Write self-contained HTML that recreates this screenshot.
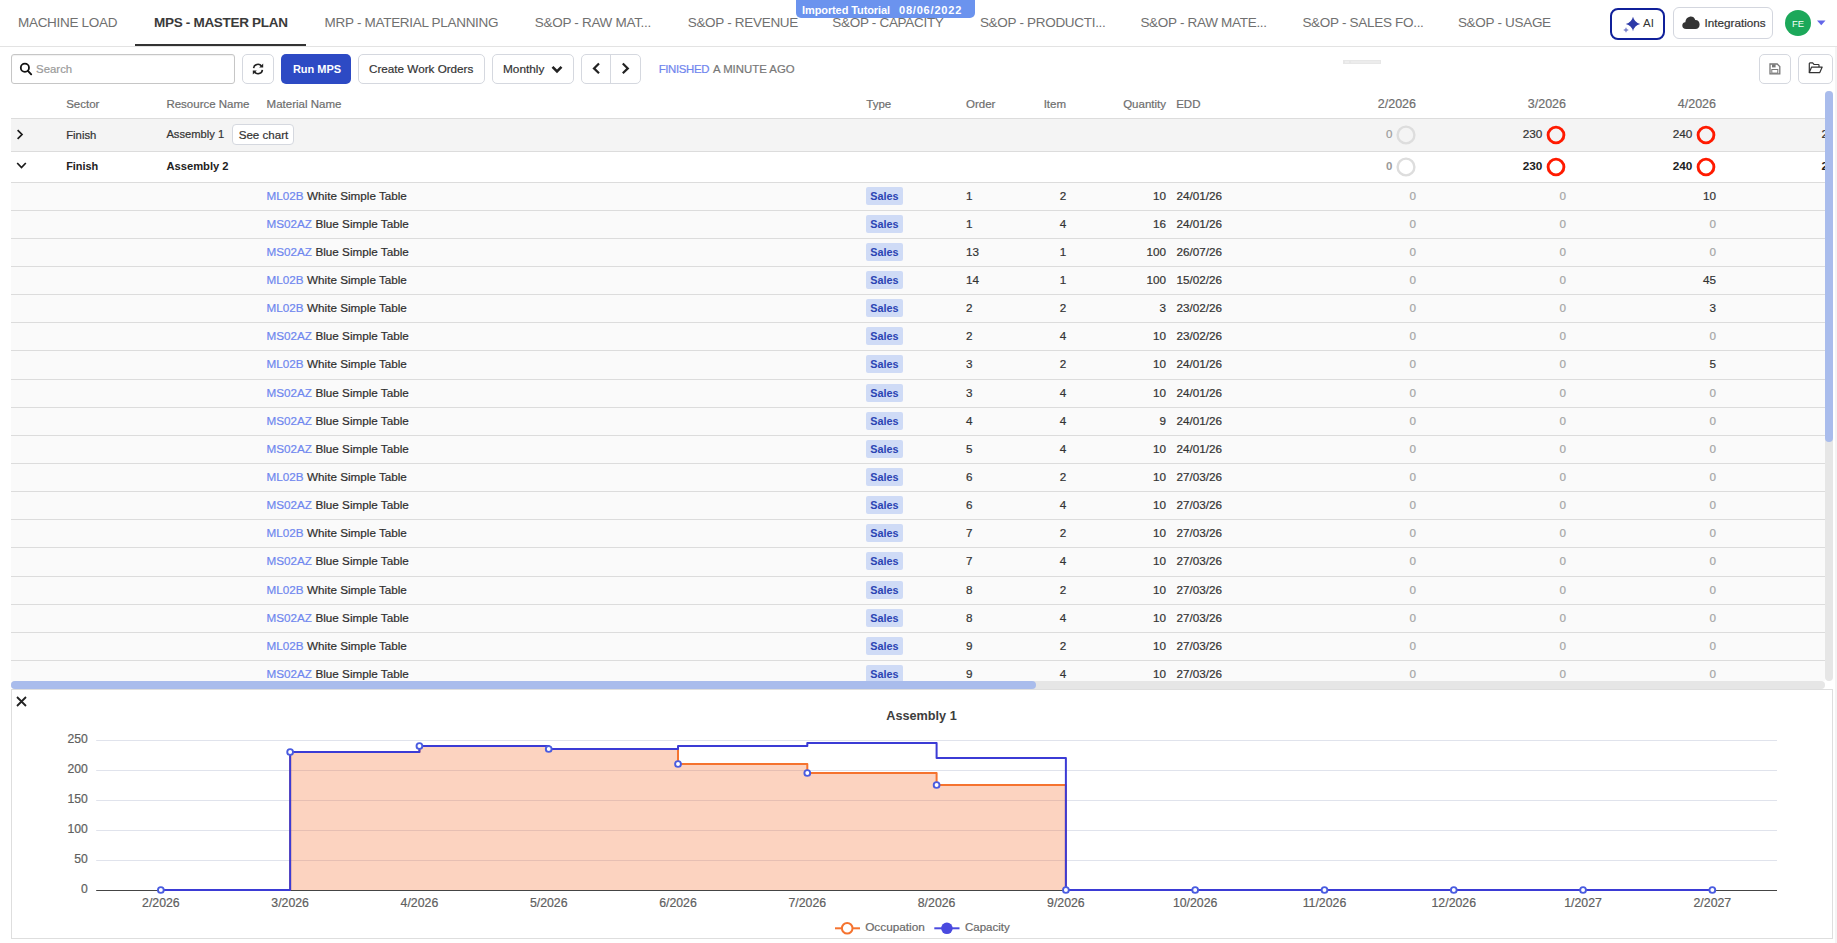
<!DOCTYPE html>
<html><head><meta charset="utf-8"><title>MPS - Master Plan</title>
<style>
html,body{margin:0;padding:0;}
body{width:1837px;height:943px;position:relative;overflow:hidden;background:#fff;font-family:"Liberation Sans",sans-serif;}
.t{position:absolute;white-space:nowrap;line-height:1;}
.n{-webkit-text-stroke:0.2px currentColor;}
svg{display:block}
</style></head><body>
<div style="position:absolute;left:0px;top:46px;width:1837px;height:1px;background:#e3e3e3"></div>
<div style="position:absolute;left:135px;top:44px;width:171px;height:2px;background:#333"></div>
<div class="t" style="left:18px;top:15.87px;font-size:13.5px;color:#707070;letter-spacing:-0.3px">MACHINE LOAD</div>
<div class="t" style="left:154px;top:15.87px;font-size:13.5px;font-weight:700;color:#3a3a3a;letter-spacing:-0.3px">MPS - MASTER PLAN</div>
<div class="t" style="left:324.6px;top:15.87px;font-size:13.5px;color:#707070;letter-spacing:-0.3px">MRP - MATERIAL PLANNING</div>
<div class="t" style="left:534.8px;top:15.87px;font-size:13.5px;color:#707070;letter-spacing:-0.3px">S&amp;OP - RAW MAT...</div>
<div class="t" style="left:687.7px;top:15.87px;font-size:13.5px;color:#707070;letter-spacing:-0.3px">S&amp;OP - REVENUE</div>
<div class="t" style="left:832.3px;top:15.87px;font-size:13.5px;color:#707070;letter-spacing:-0.3px">S&amp;OP - CAPACITY</div>
<div class="t" style="left:979.9px;top:15.87px;font-size:13.5px;color:#707070;letter-spacing:-0.3px">S&amp;OP - PRODUCTI...</div>
<div class="t" style="left:1140.4px;top:15.87px;font-size:13.5px;color:#707070;letter-spacing:-0.3px">S&amp;OP - RAW MATE...</div>
<div class="t" style="left:1302.4px;top:15.87px;font-size:13.5px;color:#707070;letter-spacing:-0.3px">S&amp;OP - SALES FO...</div>
<div class="t" style="left:1457.9px;top:15.87px;font-size:13.5px;color:#707070;letter-spacing:-0.3px">S&amp;OP - USAGE</div>
<div style="position:absolute;left:796px;top:0px;width:178.5px;height:18px;background:#6b93ee;border-radius:0 0 5px 5px"></div>
<div class="t" style="left:802px;top:4.59px;font-size:11px;font-weight:700;color:#fff;letter-spacing:-0.1px">Imported Tutorial</div>
<div class="t" style="left:899px;top:4.59px;font-size:11px;font-weight:700;color:#fff;letter-spacing:0.8px">08/06/2022</div>
<div style="position:absolute;left:1610px;top:8px;width:55px;height:32px;box-sizing:border-box;border:2px solid #10209a;border-radius:8px;background:#fff"></div>
<svg style="position:absolute;left:1622px;top:15px" width="20" height="18" viewBox="0 0 20 18"><path d="M11 1.8 Q12.4 7.6 18.2 9 Q12.4 10.4 11 16.2 Q9.6 10.4 3.8 9 Q9.6 7.6 11 1.8Z" fill="#2d3aa8"/><path d="M4 12.2 Q4.4 14.5 6.8 15 Q4.4 15.5 4 17.8 Q3.6 15.5 1.2 15 Q3.6 14.5 4 12.2Z" fill="#7b83cc"/></svg>
<div class="t" style="left:1643px;top:18.17px;font-size:11.5px;color:#333;">AI</div>
<div style="position:absolute;left:1673px;top:7px;width:100px;height:32px;box-sizing:border-box;border:1px solid #d3d6de;border-radius:6px;background:#fff"></div>
<svg style="position:absolute;left:1682px;top:15px" width="18" height="15" viewBox="0 0 18 15"><path d="M4.2 14 Q0.3 14 0.3 10.6 Q0.3 7.6 3.3 7.2 Q3.8 2.4 8.4 1.6 Q12 1.4 13.3 5 Q17.6 5.2 17.6 9.6 Q17.5 14 13.4 14 Z" fill="#333"/></svg>
<div class="t n" style="left:1704.5px;top:17.20px;font-size:11.7px;color:#333;">Integrations</div>
<div style="position:absolute;left:1785px;top:10px;width:26px;height:26px;background:#1ca85a;border-radius:50%"></div>
<div class="t" style="left:1498px;width:600px;text-align:center;top:18.76px;font-size:9.5px;color:#f4fff8;">FE</div>
<svg style="position:absolute;left:1817px;top:20px" width="9" height="6" viewBox="0 0 9 6"><path d="M0 0.5H8.5L4.25 5.2Z" fill="#6366e8"/></svg>
<div style="position:absolute;left:11px;top:54px;width:224px;height:30px;box-sizing:border-box;border:1px solid #c6c6c6;border-radius:3px;background:#fff;box-shadow:inset 0 1px 1px rgba(0,0,0,0.06)"></div>
<svg style="position:absolute;left:18px;top:61px" width="16" height="16" viewBox="0 0 16 16"><circle cx="6.9" cy="6.8" r="4.1" fill="none" stroke="#111" stroke-width="1.8"/><path d="M9.9 9.8 L13.2 13.3" stroke="#111" stroke-width="1.9" stroke-linecap="round"/></svg>
<div class="t n" style="left:36.1px;top:64.05px;font-size:11.4px;color:#9a9a9a;">Search</div>
<div style="position:absolute;left:242px;top:54px;width:32px;height:30px;box-sizing:border-box;border:1px solid #d5d8df;border-radius:5px;background:#fff"></div>
<svg style="position:absolute;left:252px;top:63px" width="12" height="12" viewBox="0 0 12 12"><path d="M1.6 5.2 A4.4 4.4 0 0 1 9.6 3.2" fill="none" stroke="#222" stroke-width="1.6"/><path d="M7.2 4.4 L11.2 4.4 L11.2 0.4 Z" fill="#222"/><path d="M10.4 6.8 A4.4 4.4 0 0 1 2.4 8.8" fill="none" stroke="#222" stroke-width="1.6"/><path d="M4.8 7.6 L0.8 7.6 L0.8 11.6 Z" fill="#222"/></svg>
<div style="position:absolute;left:281px;top:54px;width:70px;height:30px;border-radius:5px;background:#2d4ac4"></div>
<div class="t" style="left:292.9px;top:63.89px;font-size:11px;font-weight:700;color:#fff;letter-spacing:0px">Run MPS</div>
<div style="position:absolute;left:358px;top:54px;width:127px;height:30px;box-sizing:border-box;border:1px solid #d5d8df;border-radius:5px;background:#fff"></div>
<div class="t n" style="left:369px;top:63.30px;font-size:11.7px;color:#333;">Create Work Orders</div>
<div style="position:absolute;left:492px;top:54px;width:82px;height:30px;box-sizing:border-box;border:1px solid #d5d8df;border-radius:5px;background:#fff"></div>
<div class="t n" style="left:503px;top:64.01px;font-size:11.8px;color:#333;">Monthly</div>
<svg style="position:absolute;left:551px;top:65px" width="12" height="9" viewBox="0 0 12 9"><path d="M1.5 1.8 L6 6.3 L10.5 1.8" fill="none" stroke="#222" stroke-width="2.6"/></svg>
<div style="position:absolute;left:581px;top:54px;width:60px;height:30px;box-sizing:border-box;border:1px solid #d5d8df;border-radius:5px;background:#fff"></div>
<div style="position:absolute;left:610px;top:55px;width:1px;height:28px;background:#d5d8df"></div>
<svg style="position:absolute;left:591px;top:62px" width="11" height="13" viewBox="0 0 11 13"><path d="M8 1.5 L3 6.4 L8 11.3" fill="none" stroke="#222" stroke-width="2.2"/></svg>
<svg style="position:absolute;left:620px;top:62px" width="11" height="13" viewBox="0 0 11 13"><path d="M2.8 1.5 L7.8 6.4 L2.8 11.3" fill="none" stroke="#222" stroke-width="2.2"/></svg>
<div class="t n" style="left:658.7px;top:63.85px;font-size:11.4px;color:#6f85ee;letter-spacing:-0.35px">FINISHED</div>
<div class="t n" style="left:713px;top:63.85px;font-size:11.4px;color:#777;">A MINUTE AGO</div>
<div style="position:absolute;left:1343px;top:60px;width:38px;height:4px;background:#e7e7e7"></div>
<div style="position:absolute;left:1345px;top:61px;width:4px;height:2px;background:#eeeeee"></div>
<div style="position:absolute;left:1351px;top:61px;width:29px;height:2px;background:#ececec"></div>
<div style="position:absolute;left:1759px;top:54px;width:32px;height:30px;box-sizing:border-box;border:1px solid #d5d8df;border-radius:5px;background:#fff"></div>
<svg style="position:absolute;left:1769px;top:63px" width="12" height="12" viewBox="0 0 12 12"><path d="M1 1 H8.2 L10.8 3.6 V10.8 H1 Z" fill="none" stroke="#777" stroke-width="1.3"/><rect x="3" y="1.4" width="3.6" height="3" fill="#777"/><rect x="2.8" y="6.5" width="6" height="3.6" fill="none" stroke="#777" stroke-width="1"/></svg>
<div style="position:absolute;left:1798px;top:54px;width:35px;height:30px;box-sizing:border-box;border:1px solid #d5d8df;border-radius:5px;background:#fff"></div>
<svg style="position:absolute;left:1808px;top:62px" width="16" height="12" viewBox="0 0 16 12"><path d="M1.3 10.6 V1.6 Q1.3 0.9 2 0.9 H4.6 L6 2.5 H10.3 Q11 2.5 11 3.2 V4.9" fill="none" stroke="#333" stroke-width="1.2"/><path d="M1.3 10.6 L3.6 5.1 H14.2 L11.8 10.6 Z" fill="none" stroke="#333" stroke-width="1.2" stroke-linejoin="round"/></svg>
<div class="t n" style="left:66.2px;top:98.77px;font-size:11.5px;color:#6e6e6e;">Sector</div>
<div class="t n" style="left:166.4px;top:98.77px;font-size:11.5px;color:#6e6e6e;">Resource Name</div>
<div class="t n" style="left:266.6px;top:98.77px;font-size:11.5px;color:#6e6e6e;">Material Name</div>
<div class="t n" style="left:866.3px;top:98.77px;font-size:11.5px;color:#6e6e6e;">Type</div>
<div class="t n" style="left:966px;top:98.77px;font-size:11.5px;color:#6e6e6e;">Order</div>
<div class="t n" style="right:771px;top:98.77px;font-size:11.5px;color:#6e6e6e;">Item</div>
<div class="t n" style="right:671px;top:98.77px;font-size:11.5px;color:#6e6e6e;">Quantity</div>
<div class="t n" style="left:1176.2px;top:98.77px;font-size:11.5px;color:#6e6e6e;">EDD</div>
<div class="t n" style="right:421px;top:97.92px;font-size:12.5px;color:#6e6e6e;">2/2026</div>
<div class="t n" style="right:271px;top:97.92px;font-size:12.5px;color:#6e6e6e;">3/2026</div>
<div class="t n" style="right:121px;top:97.92px;font-size:12.5px;color:#6e6e6e;">4/2026</div>
<div style="position:absolute;left:11px;top:118px;width:1814px;height:1px;background:#dcdcdc"></div>
<div style="position:absolute;left:11px;top:119px;width:1814px;height:32px;background:#f4f4f4"></div>
<div style="position:absolute;left:11px;top:151px;width:1814px;height:1px;background:#dcdcdc"></div>
<div style="position:absolute;left:11px;top:152px;width:1814px;height:30px;background:#fff"></div>
<div style="position:absolute;left:11px;top:182px;width:1814px;height:1px;background:#dcdcdc"></div>
<svg style="position:absolute;left:15px;top:128px" width="10" height="13" viewBox="0 0 10 13"><path d="M2.6 2.2 L7 6.5 L2.6 10.8" fill="none" stroke="#1a1a1a" stroke-width="1.7"/></svg>
<svg style="position:absolute;left:15px;top:160px" width="13" height="11" viewBox="0 0 13 11"><path d="M2.2 3 L6.5 7.6 L10.8 3" fill="none" stroke="#1a1a1a" stroke-width="1.7"/></svg>
<div class="t n" style="left:66.2px;top:129.83px;font-size:11.3px;color:#333;">Finish</div>
<div class="t n" style="left:166.4px;top:129.02px;font-size:11.2px;color:#333;">Assembly 1</div>
<div style="position:absolute;left:232.2px;top:124.2px;width:61.7px;height:21.3px;box-sizing:border-box;border:1px solid #d5d8df;border-radius:4px;background:#fff"></div>
<div class="t n" style="left:238.7px;top:128.88px;font-size:11.6px;color:#333;">See chart</div>
<div class="t" style="left:66.2px;top:160.97px;font-size:10.9px;font-weight:700;color:#222;">Finish</div>
<div class="t" style="left:166.4px;top:160.72px;font-size:11.2px;font-weight:700;color:#222;">Assembly 2</div>
<div class="t n" style="right:444.5px;top:128.87px;font-size:11.5px;color:#9a9a9a;">0</div>
<svg style="position:absolute;left:1395px;top:124px" width="22" height="22" viewBox="0 0 22 22"><circle cx="11" cy="11" r="8.4" fill="none" stroke="#dddddd" stroke-width="2.4"/></svg>
<div class="t n" style="right:294.70000000000005px;top:128.61px;font-size:11.8px;color:#333;">230</div>
<svg style="position:absolute;left:1545px;top:124px" width="22" height="22" viewBox="0 0 22 22"><circle cx="11" cy="11" r="7.9" fill="none" stroke="#ff1a00" stroke-width="2.9"/></svg>
<div class="t n" style="right:144.70000000000005px;top:128.61px;font-size:11.8px;color:#333;">240</div>
<svg style="position:absolute;left:1695px;top:124px" width="22" height="22" viewBox="0 0 22 22"><circle cx="11" cy="11" r="7.9" fill="none" stroke="#ff1a00" stroke-width="2.9"/></svg>
<div class="t" style="right:444.5px;top:160.87px;font-size:11.5px;font-weight:700;color:#9a9a9a;">0</div>
<svg style="position:absolute;left:1395px;top:156px" width="22" height="22" viewBox="0 0 22 22"><circle cx="11" cy="11" r="8.4" fill="none" stroke="#dddddd" stroke-width="2.4"/></svg>
<div class="t" style="right:294.70000000000005px;top:160.61px;font-size:11.8px;font-weight:700;color:#222;">230</div>
<svg style="position:absolute;left:1545px;top:156px" width="22" height="22" viewBox="0 0 22 22"><circle cx="11" cy="11" r="7.9" fill="none" stroke="#ff1a00" stroke-width="2.9"/></svg>
<div class="t" style="right:144.70000000000005px;top:160.61px;font-size:11.8px;font-weight:700;color:#222;">240</div>
<svg style="position:absolute;left:1695px;top:156px" width="22" height="22" viewBox="0 0 22 22"><circle cx="11" cy="11" r="7.9" fill="none" stroke="#ff1a00" stroke-width="2.9"/></svg>
<div style="position:absolute;left:1800px;top:110px;width:25px;height:70px;overflow:hidden">
<div class="t n" style="left:21.5px;top:18.61px;font-size:11.8px;color:#333;">2</div>
<div class="t" style="left:21.5px;top:50.61px;font-size:11.8px;font-weight:700;color:#222;">2</div>
</div>
<div style="position:absolute;left:11px;top:183px;width:1814px;height:498px;background:#fafafa"></div>
<div class="t n" style="left:266.4px;top:189.90px;font-size:11.7px;color:#6f87ef;">ML02B</div>
<div class="t n" style="left:307.05px;top:189.90px;font-size:11.7px;color:#2e2e2e;">White Simple Table</div>
<div style="position:absolute;left:866px;top:187px;width:37px;height:18px;background:#cfdbf6;border-radius:2px"></div>
<div class="t" style="left:870.2px;top:190.66px;font-size:10.8px;font-weight:700;color:#2b44b3;">Sales</div>
<div class="t n" style="left:966px;top:189.90px;font-size:11.7px;color:#333;">1</div>
<div class="t n" style="right:770.7px;top:189.90px;font-size:11.7px;color:#333;">2</div>
<div class="t n" style="right:671px;top:189.90px;font-size:11.7px;color:#333;">10</div>
<div class="t n" style="left:1176.5px;top:189.90px;font-size:11.7px;color:#333;">24/01/26</div>
<div class="t n" style="right:421px;top:189.90px;font-size:11.7px;color:#a5a5a5;">0</div>
<div class="t n" style="right:271px;top:189.90px;font-size:11.7px;color:#a5a5a5;">0</div>
<div class="t n" style="right:121px;top:189.90px;font-size:11.7px;color:#333;">10</div>
<div style="position:absolute;left:11px;top:210px;width:1814px;height:1px;background:#dcdcdc"></div>
<div class="t n" style="left:266.4px;top:217.90px;font-size:11.7px;color:#6f87ef;">MS02AZ</div>
<div class="t n" style="left:315.47px;top:217.90px;font-size:11.7px;color:#2e2e2e;">Blue Simple Table</div>
<div style="position:absolute;left:866px;top:215px;width:37px;height:18px;background:#cfdbf6;border-radius:2px"></div>
<div class="t" style="left:870.2px;top:218.66px;font-size:10.8px;font-weight:700;color:#2b44b3;">Sales</div>
<div class="t n" style="left:966px;top:217.90px;font-size:11.7px;color:#333;">1</div>
<div class="t n" style="right:770.7px;top:217.90px;font-size:11.7px;color:#333;">4</div>
<div class="t n" style="right:671px;top:217.90px;font-size:11.7px;color:#333;">16</div>
<div class="t n" style="left:1176.5px;top:217.90px;font-size:11.7px;color:#333;">24/01/26</div>
<div class="t n" style="right:421px;top:217.90px;font-size:11.7px;color:#a5a5a5;">0</div>
<div class="t n" style="right:271px;top:217.90px;font-size:11.7px;color:#a5a5a5;">0</div>
<div class="t n" style="right:121px;top:217.90px;font-size:11.7px;color:#a5a5a5;">0</div>
<div style="position:absolute;left:11px;top:238px;width:1814px;height:1px;background:#dcdcdc"></div>
<div class="t n" style="left:266.4px;top:245.90px;font-size:11.7px;color:#6f87ef;">MS02AZ</div>
<div class="t n" style="left:315.47px;top:245.90px;font-size:11.7px;color:#2e2e2e;">Blue Simple Table</div>
<div style="position:absolute;left:866px;top:243px;width:37px;height:18px;background:#cfdbf6;border-radius:2px"></div>
<div class="t" style="left:870.2px;top:246.66px;font-size:10.8px;font-weight:700;color:#2b44b3;">Sales</div>
<div class="t n" style="left:966px;top:245.90px;font-size:11.7px;color:#333;">13</div>
<div class="t n" style="right:770.7px;top:245.90px;font-size:11.7px;color:#333;">1</div>
<div class="t n" style="right:671px;top:245.90px;font-size:11.7px;color:#333;">100</div>
<div class="t n" style="left:1176.5px;top:245.90px;font-size:11.7px;color:#333;">26/07/26</div>
<div class="t n" style="right:421px;top:245.90px;font-size:11.7px;color:#a5a5a5;">0</div>
<div class="t n" style="right:271px;top:245.90px;font-size:11.7px;color:#a5a5a5;">0</div>
<div class="t n" style="right:121px;top:245.90px;font-size:11.7px;color:#a5a5a5;">0</div>
<div style="position:absolute;left:11px;top:266px;width:1814px;height:1px;background:#dcdcdc"></div>
<div class="t n" style="left:266.4px;top:273.90px;font-size:11.7px;color:#6f87ef;">ML02B</div>
<div class="t n" style="left:307.05px;top:273.90px;font-size:11.7px;color:#2e2e2e;">White Simple Table</div>
<div style="position:absolute;left:866px;top:271px;width:37px;height:18px;background:#cfdbf6;border-radius:2px"></div>
<div class="t" style="left:870.2px;top:274.66px;font-size:10.8px;font-weight:700;color:#2b44b3;">Sales</div>
<div class="t n" style="left:966px;top:273.90px;font-size:11.7px;color:#333;">14</div>
<div class="t n" style="right:770.7px;top:273.90px;font-size:11.7px;color:#333;">1</div>
<div class="t n" style="right:671px;top:273.90px;font-size:11.7px;color:#333;">100</div>
<div class="t n" style="left:1176.5px;top:273.90px;font-size:11.7px;color:#333;">15/02/26</div>
<div class="t n" style="right:421px;top:273.90px;font-size:11.7px;color:#a5a5a5;">0</div>
<div class="t n" style="right:271px;top:273.90px;font-size:11.7px;color:#a5a5a5;">0</div>
<div class="t n" style="right:121px;top:273.90px;font-size:11.7px;color:#333;">45</div>
<div style="position:absolute;left:11px;top:294px;width:1814px;height:1px;background:#dcdcdc"></div>
<div class="t n" style="left:266.4px;top:301.90px;font-size:11.7px;color:#6f87ef;">ML02B</div>
<div class="t n" style="left:307.05px;top:301.90px;font-size:11.7px;color:#2e2e2e;">White Simple Table</div>
<div style="position:absolute;left:866px;top:299px;width:37px;height:18px;background:#cfdbf6;border-radius:2px"></div>
<div class="t" style="left:870.2px;top:302.66px;font-size:10.8px;font-weight:700;color:#2b44b3;">Sales</div>
<div class="t n" style="left:966px;top:301.90px;font-size:11.7px;color:#333;">2</div>
<div class="t n" style="right:770.7px;top:301.90px;font-size:11.7px;color:#333;">2</div>
<div class="t n" style="right:671px;top:301.90px;font-size:11.7px;color:#333;">3</div>
<div class="t n" style="left:1176.5px;top:301.90px;font-size:11.7px;color:#333;">23/02/26</div>
<div class="t n" style="right:421px;top:301.90px;font-size:11.7px;color:#a5a5a5;">0</div>
<div class="t n" style="right:271px;top:301.90px;font-size:11.7px;color:#a5a5a5;">0</div>
<div class="t n" style="right:121px;top:301.90px;font-size:11.7px;color:#333;">3</div>
<div style="position:absolute;left:11px;top:322px;width:1814px;height:1px;background:#dcdcdc"></div>
<div class="t n" style="left:266.4px;top:329.90px;font-size:11.7px;color:#6f87ef;">MS02AZ</div>
<div class="t n" style="left:315.47px;top:329.90px;font-size:11.7px;color:#2e2e2e;">Blue Simple Table</div>
<div style="position:absolute;left:866px;top:327px;width:37px;height:18px;background:#cfdbf6;border-radius:2px"></div>
<div class="t" style="left:870.2px;top:330.66px;font-size:10.8px;font-weight:700;color:#2b44b3;">Sales</div>
<div class="t n" style="left:966px;top:329.90px;font-size:11.7px;color:#333;">2</div>
<div class="t n" style="right:770.7px;top:329.90px;font-size:11.7px;color:#333;">4</div>
<div class="t n" style="right:671px;top:329.90px;font-size:11.7px;color:#333;">10</div>
<div class="t n" style="left:1176.5px;top:329.90px;font-size:11.7px;color:#333;">23/02/26</div>
<div class="t n" style="right:421px;top:329.90px;font-size:11.7px;color:#a5a5a5;">0</div>
<div class="t n" style="right:271px;top:329.90px;font-size:11.7px;color:#a5a5a5;">0</div>
<div class="t n" style="right:121px;top:329.90px;font-size:11.7px;color:#a5a5a5;">0</div>
<div style="position:absolute;left:11px;top:350px;width:1814px;height:1px;background:#dcdcdc"></div>
<div class="t n" style="left:266.4px;top:357.90px;font-size:11.7px;color:#6f87ef;">ML02B</div>
<div class="t n" style="left:307.05px;top:357.90px;font-size:11.7px;color:#2e2e2e;">White Simple Table</div>
<div style="position:absolute;left:866px;top:355px;width:37px;height:18px;background:#cfdbf6;border-radius:2px"></div>
<div class="t" style="left:870.2px;top:358.66px;font-size:10.8px;font-weight:700;color:#2b44b3;">Sales</div>
<div class="t n" style="left:966px;top:357.90px;font-size:11.7px;color:#333;">3</div>
<div class="t n" style="right:770.7px;top:357.90px;font-size:11.7px;color:#333;">2</div>
<div class="t n" style="right:671px;top:357.90px;font-size:11.7px;color:#333;">10</div>
<div class="t n" style="left:1176.5px;top:357.90px;font-size:11.7px;color:#333;">24/01/26</div>
<div class="t n" style="right:421px;top:357.90px;font-size:11.7px;color:#a5a5a5;">0</div>
<div class="t n" style="right:271px;top:357.90px;font-size:11.7px;color:#a5a5a5;">0</div>
<div class="t n" style="right:121px;top:357.90px;font-size:11.7px;color:#333;">5</div>
<div style="position:absolute;left:11px;top:379px;width:1814px;height:1px;background:#dcdcdc"></div>
<div class="t n" style="left:266.4px;top:386.90px;font-size:11.7px;color:#6f87ef;">MS02AZ</div>
<div class="t n" style="left:315.47px;top:386.90px;font-size:11.7px;color:#2e2e2e;">Blue Simple Table</div>
<div style="position:absolute;left:866px;top:384px;width:37px;height:18px;background:#cfdbf6;border-radius:2px"></div>
<div class="t" style="left:870.2px;top:387.66px;font-size:10.8px;font-weight:700;color:#2b44b3;">Sales</div>
<div class="t n" style="left:966px;top:386.90px;font-size:11.7px;color:#333;">3</div>
<div class="t n" style="right:770.7px;top:386.90px;font-size:11.7px;color:#333;">4</div>
<div class="t n" style="right:671px;top:386.90px;font-size:11.7px;color:#333;">10</div>
<div class="t n" style="left:1176.5px;top:386.90px;font-size:11.7px;color:#333;">24/01/26</div>
<div class="t n" style="right:421px;top:386.90px;font-size:11.7px;color:#a5a5a5;">0</div>
<div class="t n" style="right:271px;top:386.90px;font-size:11.7px;color:#a5a5a5;">0</div>
<div class="t n" style="right:121px;top:386.90px;font-size:11.7px;color:#a5a5a5;">0</div>
<div style="position:absolute;left:11px;top:407px;width:1814px;height:1px;background:#dcdcdc"></div>
<div class="t n" style="left:266.4px;top:414.90px;font-size:11.7px;color:#6f87ef;">MS02AZ</div>
<div class="t n" style="left:315.47px;top:414.90px;font-size:11.7px;color:#2e2e2e;">Blue Simple Table</div>
<div style="position:absolute;left:866px;top:412px;width:37px;height:18px;background:#cfdbf6;border-radius:2px"></div>
<div class="t" style="left:870.2px;top:415.66px;font-size:10.8px;font-weight:700;color:#2b44b3;">Sales</div>
<div class="t n" style="left:966px;top:414.90px;font-size:11.7px;color:#333;">4</div>
<div class="t n" style="right:770.7px;top:414.90px;font-size:11.7px;color:#333;">4</div>
<div class="t n" style="right:671px;top:414.90px;font-size:11.7px;color:#333;">9</div>
<div class="t n" style="left:1176.5px;top:414.90px;font-size:11.7px;color:#333;">24/01/26</div>
<div class="t n" style="right:421px;top:414.90px;font-size:11.7px;color:#a5a5a5;">0</div>
<div class="t n" style="right:271px;top:414.90px;font-size:11.7px;color:#a5a5a5;">0</div>
<div class="t n" style="right:121px;top:414.90px;font-size:11.7px;color:#a5a5a5;">0</div>
<div style="position:absolute;left:11px;top:435px;width:1814px;height:1px;background:#dcdcdc"></div>
<div class="t n" style="left:266.4px;top:442.90px;font-size:11.7px;color:#6f87ef;">MS02AZ</div>
<div class="t n" style="left:315.47px;top:442.90px;font-size:11.7px;color:#2e2e2e;">Blue Simple Table</div>
<div style="position:absolute;left:866px;top:440px;width:37px;height:18px;background:#cfdbf6;border-radius:2px"></div>
<div class="t" style="left:870.2px;top:443.66px;font-size:10.8px;font-weight:700;color:#2b44b3;">Sales</div>
<div class="t n" style="left:966px;top:442.90px;font-size:11.7px;color:#333;">5</div>
<div class="t n" style="right:770.7px;top:442.90px;font-size:11.7px;color:#333;">4</div>
<div class="t n" style="right:671px;top:442.90px;font-size:11.7px;color:#333;">10</div>
<div class="t n" style="left:1176.5px;top:442.90px;font-size:11.7px;color:#333;">24/01/26</div>
<div class="t n" style="right:421px;top:442.90px;font-size:11.7px;color:#a5a5a5;">0</div>
<div class="t n" style="right:271px;top:442.90px;font-size:11.7px;color:#a5a5a5;">0</div>
<div class="t n" style="right:121px;top:442.90px;font-size:11.7px;color:#a5a5a5;">0</div>
<div style="position:absolute;left:11px;top:463px;width:1814px;height:1px;background:#dcdcdc"></div>
<div class="t n" style="left:266.4px;top:470.90px;font-size:11.7px;color:#6f87ef;">ML02B</div>
<div class="t n" style="left:307.05px;top:470.90px;font-size:11.7px;color:#2e2e2e;">White Simple Table</div>
<div style="position:absolute;left:866px;top:468px;width:37px;height:18px;background:#cfdbf6;border-radius:2px"></div>
<div class="t" style="left:870.2px;top:471.66px;font-size:10.8px;font-weight:700;color:#2b44b3;">Sales</div>
<div class="t n" style="left:966px;top:470.90px;font-size:11.7px;color:#333;">6</div>
<div class="t n" style="right:770.7px;top:470.90px;font-size:11.7px;color:#333;">2</div>
<div class="t n" style="right:671px;top:470.90px;font-size:11.7px;color:#333;">10</div>
<div class="t n" style="left:1176.5px;top:470.90px;font-size:11.7px;color:#333;">27/03/26</div>
<div class="t n" style="right:421px;top:470.90px;font-size:11.7px;color:#a5a5a5;">0</div>
<div class="t n" style="right:271px;top:470.90px;font-size:11.7px;color:#a5a5a5;">0</div>
<div class="t n" style="right:121px;top:470.90px;font-size:11.7px;color:#a5a5a5;">0</div>
<div style="position:absolute;left:11px;top:491px;width:1814px;height:1px;background:#dcdcdc"></div>
<div class="t n" style="left:266.4px;top:498.90px;font-size:11.7px;color:#6f87ef;">MS02AZ</div>
<div class="t n" style="left:315.47px;top:498.90px;font-size:11.7px;color:#2e2e2e;">Blue Simple Table</div>
<div style="position:absolute;left:866px;top:496px;width:37px;height:18px;background:#cfdbf6;border-radius:2px"></div>
<div class="t" style="left:870.2px;top:499.66px;font-size:10.8px;font-weight:700;color:#2b44b3;">Sales</div>
<div class="t n" style="left:966px;top:498.90px;font-size:11.7px;color:#333;">6</div>
<div class="t n" style="right:770.7px;top:498.90px;font-size:11.7px;color:#333;">4</div>
<div class="t n" style="right:671px;top:498.90px;font-size:11.7px;color:#333;">10</div>
<div class="t n" style="left:1176.5px;top:498.90px;font-size:11.7px;color:#333;">27/03/26</div>
<div class="t n" style="right:421px;top:498.90px;font-size:11.7px;color:#a5a5a5;">0</div>
<div class="t n" style="right:271px;top:498.90px;font-size:11.7px;color:#a5a5a5;">0</div>
<div class="t n" style="right:121px;top:498.90px;font-size:11.7px;color:#a5a5a5;">0</div>
<div style="position:absolute;left:11px;top:519px;width:1814px;height:1px;background:#dcdcdc"></div>
<div class="t n" style="left:266.4px;top:526.90px;font-size:11.7px;color:#6f87ef;">ML02B</div>
<div class="t n" style="left:307.05px;top:526.90px;font-size:11.7px;color:#2e2e2e;">White Simple Table</div>
<div style="position:absolute;left:866px;top:524px;width:37px;height:18px;background:#cfdbf6;border-radius:2px"></div>
<div class="t" style="left:870.2px;top:527.66px;font-size:10.8px;font-weight:700;color:#2b44b3;">Sales</div>
<div class="t n" style="left:966px;top:526.90px;font-size:11.7px;color:#333;">7</div>
<div class="t n" style="right:770.7px;top:526.90px;font-size:11.7px;color:#333;">2</div>
<div class="t n" style="right:671px;top:526.90px;font-size:11.7px;color:#333;">10</div>
<div class="t n" style="left:1176.5px;top:526.90px;font-size:11.7px;color:#333;">27/03/26</div>
<div class="t n" style="right:421px;top:526.90px;font-size:11.7px;color:#a5a5a5;">0</div>
<div class="t n" style="right:271px;top:526.90px;font-size:11.7px;color:#a5a5a5;">0</div>
<div class="t n" style="right:121px;top:526.90px;font-size:11.7px;color:#a5a5a5;">0</div>
<div style="position:absolute;left:11px;top:547px;width:1814px;height:1px;background:#dcdcdc"></div>
<div class="t n" style="left:266.4px;top:554.90px;font-size:11.7px;color:#6f87ef;">MS02AZ</div>
<div class="t n" style="left:315.47px;top:554.90px;font-size:11.7px;color:#2e2e2e;">Blue Simple Table</div>
<div style="position:absolute;left:866px;top:552px;width:37px;height:18px;background:#cfdbf6;border-radius:2px"></div>
<div class="t" style="left:870.2px;top:555.66px;font-size:10.8px;font-weight:700;color:#2b44b3;">Sales</div>
<div class="t n" style="left:966px;top:554.90px;font-size:11.7px;color:#333;">7</div>
<div class="t n" style="right:770.7px;top:554.90px;font-size:11.7px;color:#333;">4</div>
<div class="t n" style="right:671px;top:554.90px;font-size:11.7px;color:#333;">10</div>
<div class="t n" style="left:1176.5px;top:554.90px;font-size:11.7px;color:#333;">27/03/26</div>
<div class="t n" style="right:421px;top:554.90px;font-size:11.7px;color:#a5a5a5;">0</div>
<div class="t n" style="right:271px;top:554.90px;font-size:11.7px;color:#a5a5a5;">0</div>
<div class="t n" style="right:121px;top:554.90px;font-size:11.7px;color:#a5a5a5;">0</div>
<div style="position:absolute;left:11px;top:576px;width:1814px;height:1px;background:#dcdcdc"></div>
<div class="t n" style="left:266.4px;top:583.90px;font-size:11.7px;color:#6f87ef;">ML02B</div>
<div class="t n" style="left:307.05px;top:583.90px;font-size:11.7px;color:#2e2e2e;">White Simple Table</div>
<div style="position:absolute;left:866px;top:581px;width:37px;height:18px;background:#cfdbf6;border-radius:2px"></div>
<div class="t" style="left:870.2px;top:584.66px;font-size:10.8px;font-weight:700;color:#2b44b3;">Sales</div>
<div class="t n" style="left:966px;top:583.90px;font-size:11.7px;color:#333;">8</div>
<div class="t n" style="right:770.7px;top:583.90px;font-size:11.7px;color:#333;">2</div>
<div class="t n" style="right:671px;top:583.90px;font-size:11.7px;color:#333;">10</div>
<div class="t n" style="left:1176.5px;top:583.90px;font-size:11.7px;color:#333;">27/03/26</div>
<div class="t n" style="right:421px;top:583.90px;font-size:11.7px;color:#a5a5a5;">0</div>
<div class="t n" style="right:271px;top:583.90px;font-size:11.7px;color:#a5a5a5;">0</div>
<div class="t n" style="right:121px;top:583.90px;font-size:11.7px;color:#a5a5a5;">0</div>
<div style="position:absolute;left:11px;top:604px;width:1814px;height:1px;background:#dcdcdc"></div>
<div class="t n" style="left:266.4px;top:611.90px;font-size:11.7px;color:#6f87ef;">MS02AZ</div>
<div class="t n" style="left:315.47px;top:611.90px;font-size:11.7px;color:#2e2e2e;">Blue Simple Table</div>
<div style="position:absolute;left:866px;top:609px;width:37px;height:18px;background:#cfdbf6;border-radius:2px"></div>
<div class="t" style="left:870.2px;top:612.66px;font-size:10.8px;font-weight:700;color:#2b44b3;">Sales</div>
<div class="t n" style="left:966px;top:611.90px;font-size:11.7px;color:#333;">8</div>
<div class="t n" style="right:770.7px;top:611.90px;font-size:11.7px;color:#333;">4</div>
<div class="t n" style="right:671px;top:611.90px;font-size:11.7px;color:#333;">10</div>
<div class="t n" style="left:1176.5px;top:611.90px;font-size:11.7px;color:#333;">27/03/26</div>
<div class="t n" style="right:421px;top:611.90px;font-size:11.7px;color:#a5a5a5;">0</div>
<div class="t n" style="right:271px;top:611.90px;font-size:11.7px;color:#a5a5a5;">0</div>
<div class="t n" style="right:121px;top:611.90px;font-size:11.7px;color:#a5a5a5;">0</div>
<div style="position:absolute;left:11px;top:632px;width:1814px;height:1px;background:#dcdcdc"></div>
<div class="t n" style="left:266.4px;top:639.90px;font-size:11.7px;color:#6f87ef;">ML02B</div>
<div class="t n" style="left:307.05px;top:639.90px;font-size:11.7px;color:#2e2e2e;">White Simple Table</div>
<div style="position:absolute;left:866px;top:637px;width:37px;height:18px;background:#cfdbf6;border-radius:2px"></div>
<div class="t" style="left:870.2px;top:640.66px;font-size:10.8px;font-weight:700;color:#2b44b3;">Sales</div>
<div class="t n" style="left:966px;top:639.90px;font-size:11.7px;color:#333;">9</div>
<div class="t n" style="right:770.7px;top:639.90px;font-size:11.7px;color:#333;">2</div>
<div class="t n" style="right:671px;top:639.90px;font-size:11.7px;color:#333;">10</div>
<div class="t n" style="left:1176.5px;top:639.90px;font-size:11.7px;color:#333;">27/03/26</div>
<div class="t n" style="right:421px;top:639.90px;font-size:11.7px;color:#a5a5a5;">0</div>
<div class="t n" style="right:271px;top:639.90px;font-size:11.7px;color:#a5a5a5;">0</div>
<div class="t n" style="right:121px;top:639.90px;font-size:11.7px;color:#a5a5a5;">0</div>
<div style="position:absolute;left:11px;top:660px;width:1814px;height:1px;background:#dcdcdc"></div>
<div class="t n" style="left:266.4px;top:667.90px;font-size:11.7px;color:#6f87ef;">MS02AZ</div>
<div class="t n" style="left:315.47px;top:667.90px;font-size:11.7px;color:#2e2e2e;">Blue Simple Table</div>
<div style="position:absolute;left:866px;top:665px;width:37px;height:18px;background:#cfdbf6;border-radius:2px"></div>
<div class="t" style="left:870.2px;top:668.66px;font-size:10.8px;font-weight:700;color:#2b44b3;">Sales</div>
<div class="t n" style="left:966px;top:667.90px;font-size:11.7px;color:#333;">9</div>
<div class="t n" style="right:770.7px;top:667.90px;font-size:11.7px;color:#333;">4</div>
<div class="t n" style="right:671px;top:667.90px;font-size:11.7px;color:#333;">10</div>
<div class="t n" style="left:1176.5px;top:667.90px;font-size:11.7px;color:#333;">27/03/26</div>
<div class="t n" style="right:421px;top:667.90px;font-size:11.7px;color:#a5a5a5;">0</div>
<div class="t n" style="right:271px;top:667.90px;font-size:11.7px;color:#a5a5a5;">0</div>
<div class="t n" style="right:121px;top:667.90px;font-size:11.7px;color:#a5a5a5;">0</div>
<div style="position:absolute;left:11px;top:681px;width:1814px;height:8px;background:#e6e6e6;border-radius:4px"></div>
<div style="position:absolute;left:11px;top:681px;width:1025px;height:8px;background:#a9bcec;border-radius:4px"></div>
<div style="position:absolute;left:1825px;top:91px;width:8px;height:590px;background:#e6e6e6;border-radius:4px"></div>
<div style="position:absolute;left:1825px;top:91px;width:8px;height:351px;background:#a9bcec;border-radius:4px"></div>
<div style="position:absolute;left:1835px;top:47px;width:2px;height:896px;background:#f4f4f4"></div>
<div style="position:absolute;left:11px;top:689px;width:1822px;height:250px;box-sizing:border-box;border:1px solid #dedede;background:#fff"></div>
<svg style="position:absolute;left:15px;top:695px" width="13" height="13" viewBox="0 0 13 13"><path d="M2 2 L11 11 M11 2 L2 11" stroke="#222" stroke-width="1.8"/></svg>
<div class="t" style="left:621.5px;width:600px;text-align:center;top:710.15px;font-size:12.7px;font-weight:700;color:#3d3d3d;">Assembly 1</div>
<svg style="position:absolute;left:0;top:0" width="1837" height="943" viewBox="0 0 1837 943"><line x1="96.2" x2="1777" y1="860.5" y2="860.5" stroke="#e0e3ec" stroke-width="1"/><line x1="96.2" x2="1777" y1="830.5" y2="830.5" stroke="#e0e3ec" stroke-width="1"/><line x1="96.2" x2="1777" y1="800.5" y2="800.5" stroke="#e0e3ec" stroke-width="1"/><line x1="96.2" x2="1777" y1="770.5" y2="770.5" stroke="#e0e3ec" stroke-width="1"/><line x1="96.2" x2="1777" y1="740.5" y2="740.5" stroke="#e0e3ec" stroke-width="1"/><path d="M290.14 890 V752.00 H419.43 V746.00 H548.72 V749.00 H678.02 V764.00 H807.31 V773.00 H936.60 V785.00 H1065.89 V890 Z" fill="rgba(245,110,45,0.3)"/><line x1="96.2" x2="1777" y1="890.5" y2="890.5" stroke="#444" stroke-width="1"/><path d="M160.85 890.00 H290.14 V752.00 H419.43 V746.00 H548.72 V749.00 H678.02 V764.00 H807.31 V773.00 H936.60 V785.00 H1065.89 V890.00 H1195.18 V890.00 H1324.48 V890.00 H1453.77 V890.00 H1583.06 V890.00 H1712.35 V890.00" fill="none" stroke="#f5732f" stroke-width="2" stroke-linejoin="round"/><path d="M160.85 890.00 H290.14 V752.00 H419.43 V746.00 H548.72 V749.00 H678.02 V746.00 H807.31 V743.00 H936.60 V758.00 H1065.89 V890.00 H1195.18 V890.00 H1324.48 V890.00 H1453.77 V890.00 H1583.06 V890.00 H1712.35 V890.00" fill="none" stroke="#3b3bd5" stroke-width="2" stroke-linejoin="round"/><circle cx="160.85" cy="890.00" r="2.9" fill="#fff" stroke="#4a5ce0" stroke-width="1.9"/><circle cx="290.14" cy="752.00" r="2.9" fill="#fff" stroke="#4a5ce0" stroke-width="1.9"/><circle cx="419.43" cy="746.00" r="2.9" fill="#fff" stroke="#4a5ce0" stroke-width="1.9"/><circle cx="548.72" cy="749.00" r="2.9" fill="#fff" stroke="#4a5ce0" stroke-width="1.9"/><circle cx="678.02" cy="764.00" r="2.9" fill="#fff" stroke="#4a5ce0" stroke-width="1.9"/><circle cx="807.31" cy="773.00" r="2.9" fill="#fff" stroke="#4a5ce0" stroke-width="1.9"/><circle cx="936.60" cy="785.00" r="2.9" fill="#fff" stroke="#4a5ce0" stroke-width="1.9"/><circle cx="1065.89" cy="890.00" r="2.9" fill="#fff" stroke="#4a5ce0" stroke-width="1.9"/><circle cx="1195.18" cy="890.00" r="2.9" fill="#fff" stroke="#4a5ce0" stroke-width="1.9"/><circle cx="1324.48" cy="890.00" r="2.9" fill="#fff" stroke="#4a5ce0" stroke-width="1.9"/><circle cx="1453.77" cy="890.00" r="2.9" fill="#fff" stroke="#4a5ce0" stroke-width="1.9"/><circle cx="1583.06" cy="890.00" r="2.9" fill="#fff" stroke="#4a5ce0" stroke-width="1.9"/><circle cx="1712.35" cy="890.00" r="2.9" fill="#fff" stroke="#4a5ce0" stroke-width="1.9"/></svg>
<div class="t n" style="right:1749.2px;top:883.07px;font-size:12.2px;color:#606060;">0</div>
<div class="t n" style="right:1749.2px;top:853.07px;font-size:12.2px;color:#606060;">50</div>
<div class="t n" style="right:1749.2px;top:823.07px;font-size:12.2px;color:#606060;">100</div>
<div class="t n" style="right:1749.2px;top:793.07px;font-size:12.2px;color:#606060;">150</div>
<div class="t n" style="right:1749.2px;top:763.07px;font-size:12.2px;color:#606060;">200</div>
<div class="t n" style="right:1749.2px;top:733.07px;font-size:12.2px;color:#606060;">250</div>
<div class="t n" style="left:-139.15384615384613px;width:600px;text-align:center;top:896.89px;font-size:12.3px;color:#606060;">2/2026</div>
<div class="t n" style="left:-9.86153846153843px;width:600px;text-align:center;top:896.89px;font-size:12.3px;color:#606060;">3/2026</div>
<div class="t n" style="left:119.43076923076927px;width:600px;text-align:center;top:896.89px;font-size:12.3px;color:#606060;">4/2026</div>
<div class="t n" style="left:248.72307692307697px;width:600px;text-align:center;top:896.89px;font-size:12.3px;color:#606060;">5/2026</div>
<div class="t n" style="left:378.01538461538473px;width:600px;text-align:center;top:896.89px;font-size:12.3px;color:#606060;">6/2026</div>
<div class="t n" style="left:507.3076923076924px;width:600px;text-align:center;top:896.89px;font-size:12.3px;color:#606060;">7/2026</div>
<div class="t n" style="left:636.6000000000001px;width:600px;text-align:center;top:896.89px;font-size:12.3px;color:#606060;">8/2026</div>
<div class="t n" style="left:765.8923076923077px;width:600px;text-align:center;top:896.89px;font-size:12.3px;color:#606060;">9/2026</div>
<div class="t n" style="left:895.1846153846154px;width:600px;text-align:center;top:896.89px;font-size:12.3px;color:#606060;">10/2026</div>
<div class="t n" style="left:1024.4769230769232px;width:600px;text-align:center;top:896.89px;font-size:12.3px;color:#606060;">11/2026</div>
<div class="t n" style="left:1153.769230769231px;width:600px;text-align:center;top:896.89px;font-size:12.3px;color:#606060;">12/2026</div>
<div class="t n" style="left:1283.0615384615387px;width:600px;text-align:center;top:896.89px;font-size:12.3px;color:#606060;">1/2027</div>
<div class="t n" style="left:1412.3538461538462px;width:600px;text-align:center;top:896.89px;font-size:12.3px;color:#606060;">2/2027</div>
<svg style="position:absolute;left:830px;top:918px" width="190" height="20" viewBox="0 0 190 20"><line x1="5" x2="30" y1="10.3" y2="10.3" stroke="#f5732f" stroke-width="2"/><circle cx="17.2" cy="10.3" r="5.3" fill="#fff" stroke="#f5732f" stroke-width="2"/><line x1="104.3" x2="129.5" y1="10.3" y2="10.3" stroke="#4a4adf" stroke-width="2"/><circle cx="116.9" cy="10.3" r="5.8" fill="#4a4adf"/></svg>
<div class="t n" style="left:865.2px;top:922.01px;font-size:11.8px;color:#6a6a6a;">Occupation</div>
<div class="t n" style="left:965px;top:922.27px;font-size:11.5px;color:#6a6a6a;">Capacity</div>
</body></html>
